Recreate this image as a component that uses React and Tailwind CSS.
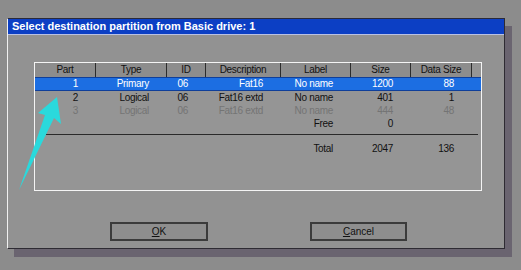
import React from "react";

const cols = [
  { name: "Part", w: "w-[61px]" },
  { name: "Type", w: "w-[71px]" },
  { name: "ID", w: "w-[39px]" },
  { name: "Description", w: "w-[75px]" },
  { name: "Label", w: "w-[70px]" },
  { name: "Size", w: "w-[60px]" },
  { name: "Data Size", w: "w-[61px]" },
];

const rows = [
  { cells: ["1", "Primary", "06", "Fat16", "No name", "1200", "88"], kind: "sel" },
  { cells: ["2", "Logical", "06", "Fat16 extd", "No name", "401", "1"], kind: "norm" },
  { cells: ["3", "Logical", "06", "Fat16 extd", "No name", "444", "48"], kind: "dim" },
  { cells: ["", "", "", "", "Free", "0", ""], kind: "norm" },
];

function Row({ cells, kind, h }) {
  const base =
    kind === "sel"
      ? "bg-[#1c6ee2] text-white border-y border-[#0f3f9a]"
      : kind === "dim"
      ? "text-[#747474]"
      : "text-[#111]";
  return (
    <div className={`flex ${h} items-center ${base}`}>
      {cells.map((c, i) => (
        <div key={i} className={`${cols[i].w} text-right pr-[18px] shrink-0`}>
          {c}
        </div>
      ))}
      <div className="flex-1" />
    </div>
  );
}

export default function App() {
  return (
    <div
      className="w-[521px] h-[270px] bg-[#8c8c8c] pt-[18px] pl-[7px] overflow-hidden"
      style={{ fontFamily: '"Liberation Sans", Arial, sans-serif' }}
    >
      <div className="w-[498px] h-[231px] bg-[#929292] border-l border-l-[#f0f0f0] border-t border-t-[#2a2a3a] border-r border-r-[#2e2b33] border-b border-b-[#2e2b33] shadow-[7px_8px_0_#6a6470] flex flex-col">
        {/* Title bar */}
        <div className="h-[15px] bg-[#0c3fc4] flex items-center pl-[4px] text-white font-bold text-[11px] leading-none whitespace-nowrap">
          Select destination partition from Basic drive: 1
        </div>
        <div className="h-px bg-[#b9c1e4]" />

        {/* Panel */}
        <div className="ml-[26px] mt-[27px] w-[448px] h-[129px] border border-[#f4f4f4] bg-[#959595] flex flex-col text-[10px] leading-none tracking-[-0.3px]">
          <div className="flex h-[14px] bg-[#8d8d8d] text-[#111]">
            {cols.map((c) => (
              <div
                key={c.name}
                className={`${c.w} shrink-0 flex items-center justify-center border-r border-[#2c2c2c]`}
              >
                {c.name}
              </div>
            ))}
            <div className="flex-1 bg-[#959595]" />
          </div>
          <Row {...rows[0]} h="h-[14px]" />
          <Row {...rows[1]} h="h-[13px]" />
          <Row {...rows[2]} h="h-[13px]" />
          <Row {...rows[3]} h="h-[13px]" />
          <div className="mt-[4px] ml-[11px] mr-[3px] h-px bg-[#2a2a2a]" />
          <div className="mt-[7px]">
            <Row cells={["", "", "", "", "Total", "2047", "136"]} kind="norm" h="h-[14px]" />
          </div>
        </div>

        {/* Buttons */}
        <div className="mt-[31px] flex pl-[102px] gap-[102px] text-[10px] leading-none text-[#111]">
          <button className="w-[98px] h-[19px] border-2 border-[#3b3b3b] bg-[#8e8e8e] flex items-center justify-center">
            <span>
              <span className="underline">O</span>K
            </span>
          </button>
          <button className="w-[97px] h-[19px] border-2 border-[#3b3b3b] bg-[#8e8e8e] flex items-center justify-center">
            <span>
              <span className="underline">C</span>ancel
            </span>
          </button>
        </div>
      </div>

      {/* Annotation arrow */}
      <svg
        className="absolute left-0 top-0 pointer-events-none"
        width="521"
        height="270"
        viewBox="0 0 521 270"
      >
        <polygon
          points="57,97 61,124 54,118 19,190 45,115 38,113"
          fill="#2ad9dc"
        />
      </svg>
    </div>
  );
}
